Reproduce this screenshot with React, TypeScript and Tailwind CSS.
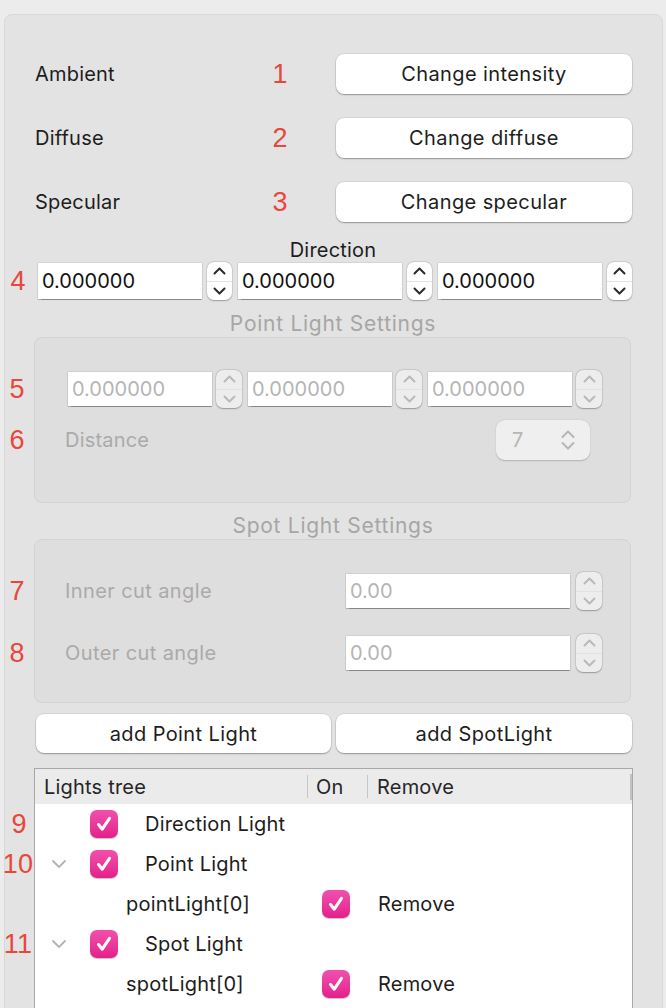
import React from 'react';

const font = { fontFamily: 'Inter, "Noto Sans", sans-serif' };

function Marker({ n, className = '' }: { n: string; className?: string }) {
  return (
    <span
      className={`text-[27px] leading-none text-[#e8473b] ${className}`}
      style={{ fontFamily: '"Liberation Sans", Arial, sans-serif' }}
    >
      {n}
    </span>
  );
}

function PushButton({ label, className = '' }: { label: string; className?: string }) {
  return (
    <button
      className={`bg-white rounded-[8px] text-[20px] tracking-[0.02em] text-[#1d1d1d] shadow-[0_1px_1.5px_rgba(0,0,0,0.3),0_0_0_0.5px_rgba(0,0,0,0.12)] ${className}`}
    >
      {label}
    </button>
  );
}

function Chevron({ dir, color }: { dir: 'up' | 'down'; color: string }) {
  return (
    <svg width="13" height="8" viewBox="0 0 13 8" fill="none">
      <path
        d={dir === 'up' ? 'M1.5 6.5 L6.5 1.5 L11.5 6.5' : 'M1.5 1.5 L6.5 6.5 L11.5 1.5'}
        stroke={color}
        strokeWidth="2"
        strokeLinecap="round"
        strokeLinejoin="round"
      />
    </svg>
  );
}

function Stepper({ disabled = false, w = 'w-[25px]' }: { disabled?: boolean; w?: string }) {
  const color = disabled ? '#b9b9b9' : '#2a2a2a';
  return (
    <div
      className={`${w} h-[38px] flex flex-col rounded-[7px] ${
        disabled ? 'bg-[#ededed]' : 'bg-white'
      } shadow-[0_0.5px_1.5px_rgba(0,0,0,0.28),0_0_0_0.5px_rgba(0,0,0,0.1)]`}
    >
      <div className="flex-1 flex items-center justify-center border-b border-[#e2e2e2]">
        <Chevron dir="up" color={color} />
      </div>
      <div className="flex-1 flex items-center justify-center">
        <Chevron dir="down" color={color} />
      </div>
    </div>
  );
}

function Field({
  value,
  disabled = false,
  className = '',
}: {
  value: string;
  disabled?: boolean;
  className?: string;
}) {
  return (
    <div
      className={`bg-white flex items-center pl-[4px] text-[20px] ${
        disabled ? 'text-[#b5b5b5]' : 'text-[#111]'
      } shadow-[0_0.5px_1px_rgba(0,0,0,0.35),0_0_0_0.5px_rgba(0,0,0,0.12)] ${className}`}
    >
      {value}
    </div>
  );
}

function Check() {
  return (
    <div className="w-[28px] h-[28px] rounded-[7px] bg-gradient-to-b from-[#f04fae] to-[#e41e8c] flex items-center justify-center shadow-[0_0.5px_1px_rgba(0,0,0,0.25)]">
      <svg width="20" height="20" viewBox="0 0 20 20" fill="none">
        <path
          d="M4.5 10.5 L8.3 15.2 L15.5 4.3"
          stroke="white"
          strokeWidth="3"
          strokeLinecap="round"
          strokeLinejoin="round"
        />
      </svg>
    </div>
  );
}

function TreeChevron() {
  return (
    <svg width="16" height="10" viewBox="0 0 16 10" fill="none">
      <path
        d="M2 2 L8 8 L14 2"
        stroke="#b4b4b4"
        strokeWidth="1.8"
        strokeLinecap="round"
        strokeLinejoin="round"
      />
    </svg>
  );
}

export default function App() {
  const rows = [
    { label: 'Ambient', n: '1', button: 'Change intensity' },
    { label: 'Diffuse', n: '2', button: 'Change diffuse' },
    { label: 'Specular', n: '3', button: 'Change specular' },
  ];

  return (
    <div className="w-[666px] h-[1008px] overflow-hidden bg-[#ececec] pt-[14px]" style={font}>
      <div className="ml-[4px] w-[659px] h-[1040px] bg-[#e3e3e3] border border-[#d8d8d8] rounded-[8px] flex flex-col pl-[29px] pr-[30px] pt-[39px] text-[#1d1d1d]">
        {/* light colour rows */}
        <div className="flex flex-col gap-[24px]">
          {rows.map(r => (
            <div key={r.label} className="h-[40px] flex items-center">
              <span className="w-[214px] pl-px text-[20px] tracking-[0.01em]">{r.label}</span>
              <span className="w-[64px] flex justify-center">
                <Marker n={r.n} />
              </span>
              <PushButton label={r.button} className="ml-[24px] w-[296px] h-[40px]" />
            </div>
          ))}
        </div>

        {/* direction */}
        <div className="mt-[17px] h-[22px] flex items-center justify-center text-[20px] tracking-[0.01em]">
          Direction
        </div>
        <div className="relative mt-[1px] h-[38px] flex items-center pl-[4px] gap-[6px]">
          <Marker n="4" className="absolute left-[-31px] w-[30px] text-center" />
          {[0, 1, 2].map(i => (
            <div key={i} className="flex items-center gap-[5px]">
              <Field value="0.000000" className="w-[164px] h-[36px]" />
              <Stepper />
            </div>
          ))}
        </div>

        {/* point light settings */}
        <div className="mt-[13px] h-[22px] flex items-center justify-center text-[21px] tracking-[0.035em] text-[#a6a6a6]">
          Point Light Settings
        </div>
        <div className="mt-[2px] w-[597px] h-[166px] bg-[#dedede] border border-[#d3d3d3] rounded-[8px] pt-[32px]">
          <div className="relative h-[38px] flex items-center pl-[33px] gap-[6px]">
            <Marker n="5" className="absolute left-[-33px] w-[30px] text-center" />
            {[0, 1, 2].map(i => (
              <div key={i} className="flex items-center gap-[4px]">
                <Field value="0.000000" disabled className="w-[144px] h-[34px]" />
                <Stepper disabled w="w-[26px]" />
              </div>
            ))}
          </div>
          <div className="relative mt-[12px] h-[40px] flex items-center justify-between pl-[30px] pr-[40px]">
            <Marker n="6" className="absolute left-[-33px] w-[30px] text-center" />
            <span className="text-[20px] tracking-[0.01em] text-[#aaaaaa]">Distance</span>
            <div className="w-[94px] h-[40px] rounded-[9px] bg-[#efefef] shadow-[0_0.5px_1.5px_rgba(0,0,0,0.2)] flex items-center justify-between pl-[16px] pr-[14px] text-[20px] text-[#b5b5b5]">
              <span>7</span>
              <svg width="16" height="24" viewBox="0 0 16 24" fill="none">
                <path
                  d="M2.5 9 L8 3.5 L13.5 9 M2.5 15 L8 20.5 L13.5 15"
                  stroke="#b5b5b5"
                  strokeWidth="2"
                  strokeLinecap="round"
                  strokeLinejoin="round"
                />
              </svg>
            </div>
          </div>
        </div>

        {/* spot light settings */}
        <div className="mt-[12px] h-[22px] flex items-center justify-center text-[21px] tracking-[0.035em] text-[#a6a6a6]">
          Spot Light Settings
        </div>
        <div className="mt-[2px] w-[597px] h-[164px] bg-[#dedede] border border-[#d3d3d3] rounded-[8px] pt-[32px] flex flex-col gap-[24px]">
          {[
            { n: '7', label: 'Inner cut angle' },
            { n: '8', label: 'Outer cut angle' },
          ].map(r => (
            <div key={r.n} className="relative h-[38px] flex items-center justify-between pl-[30px] pr-[28px]">
              <Marker n={r.n} className="absolute left-[-33px] w-[30px] text-center" />
              <span className="text-[20px] tracking-[0.02em] text-[#aaaaaa]">{r.label}</span>
              <div className="flex items-center gap-[6px]">
                <Field value="0.00" disabled className="w-[224px] h-[34px]" />
                <Stepper disabled w="w-[26px]" />
              </div>
            </div>
          ))}
        </div>

        {/* add buttons */}
        <div className="mt-[11px] flex gap-[5px] pl-[2px]">
          <PushButton label="add Point Light" className="w-[295px] h-[39px]" />
          <PushButton label="add SpotLight" className="w-[296px] h-[39px]" />
        </div>

        {/* lights tree */}
        <div className="mt-[15px] w-[599px] flex-1 bg-white border-l border-t border-r border-[#a8a8a8] flex flex-col text-[20px] tracking-[0.01em]">
          <div className="h-[35px] bg-[#ebebeb] flex items-center text-[#262626]">
            <div className="w-[273px] h-[23px] flex items-center pl-[9px] border-r border-[#c6c6c6]">
              Lights tree
            </div>
            <div className="w-[60px] h-[23px] flex items-center pl-[8px] border-r border-[#c6c6c6]">On</div>
            <div className="flex-1 flex items-center pl-[9px]">Remove</div>
            <div className="w-[2px] h-[26px] bg-[#c2c2c2]" />
          </div>

          <div className="relative h-[40px] flex items-center">
            <Marker n="9" className="absolute left-[-31px] w-[30px] text-center" />
            <div className="w-[55px]" />
            <Check />
            <span className="ml-[27px]">Direction Light</span>
          </div>

          <div className="relative h-[40px] flex items-center">
            <Marker n="10" className="absolute left-[-33px] w-[32px] text-center" />
            <div className="w-[55px] flex justify-center pl-[8px] pr-[16px]">
              <TreeChevron />
            </div>
            <Check />
            <span className="ml-[27px]">Point Light</span>
          </div>

          <div className="h-[40px] flex items-center">
            <span className="w-[287px] pl-[91px]">pointLight[0]</span>
            <Check />
            <span className="ml-[28px]">Remove</span>
          </div>

          <div className="relative h-[40px] flex items-center">
            <Marker n="11" className="absolute left-[-33px] w-[32px] text-center" />
            <div className="w-[55px] flex justify-center pl-[8px] pr-[16px]">
              <TreeChevron />
            </div>
            <Check />
            <span className="ml-[27px]">Spot Light</span>
          </div>

          <div className="h-[40px] flex items-center">
            <span className="w-[287px] pl-[91px]">spotLight[0]</span>
            <Check />
            <span className="ml-[28px]">Remove</span>
          </div>
        </div>
      </div>
    </div>
  );
}
